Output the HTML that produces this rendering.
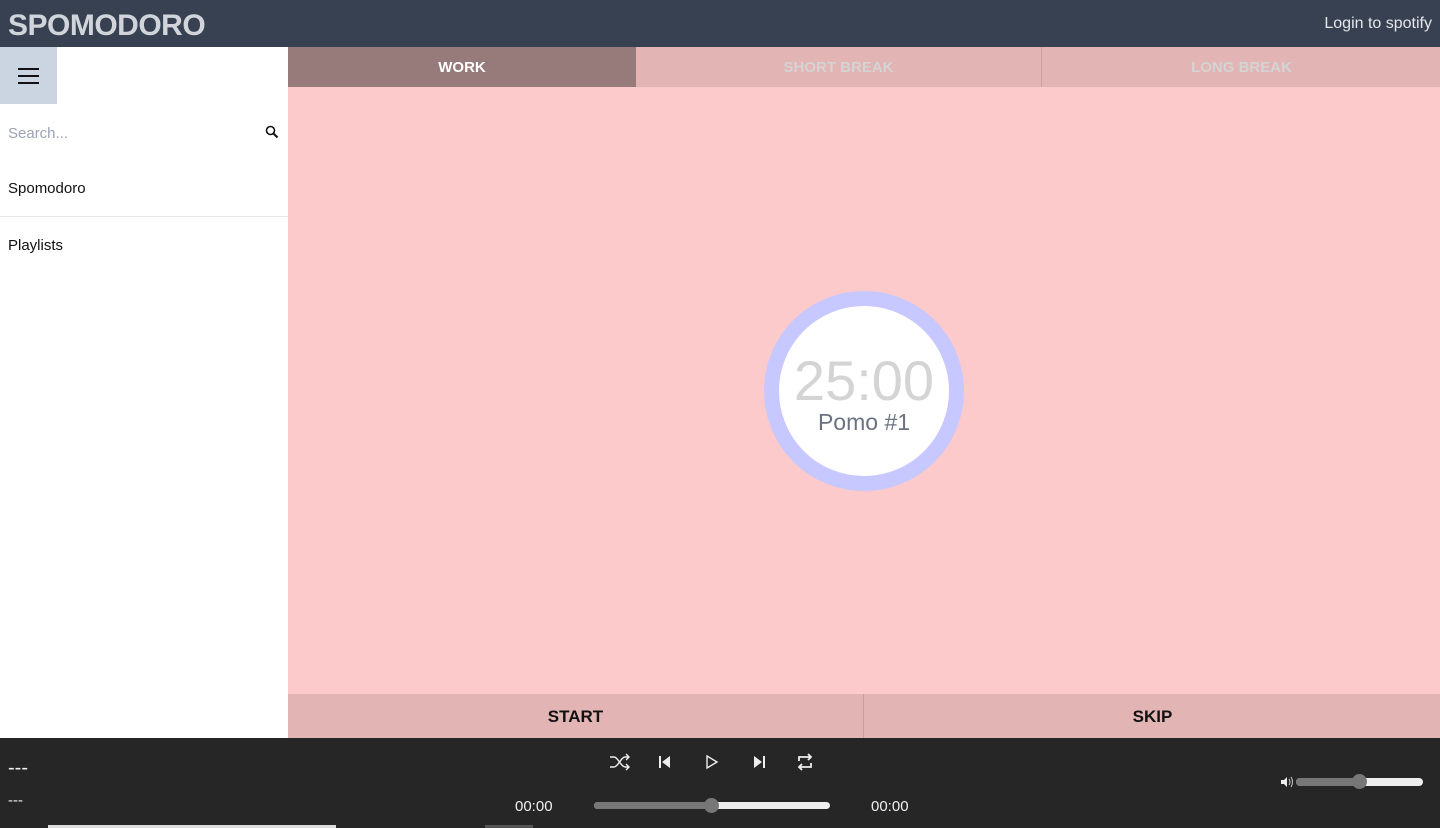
<!DOCTYPE html>
<html><head><meta charset="utf-8"><style>
*{margin:0;padding:0;box-sizing:border-box}
body{width:1440px;height:828px;overflow:hidden;font-family:"Liberation Sans",sans-serif;background:#fff;position:relative}
.hdr{position:absolute;left:0;top:0;width:1440px;height:47px;background:#374151}
.logo{position:absolute;left:8px;top:9px;font-size:30px;font-weight:bold;color:#d1d5db;letter-spacing:-0.5px}
.login{position:absolute;right:8px;top:15px;font-size:16px;color:#e5e7eb}
.side{position:absolute;left:0;top:47px;width:288px;height:691px;background:#fff}
.menu{position:absolute;left:0;top:0;width:57px;height:57px;background:#cbd5e1}
.menu i{position:absolute;left:18px;width:21px;height:2px;background:#111}
.search{position:absolute;left:8px;top:78px;font-size:15px;color:#9ca3af}
.item{position:absolute;left:8px;font-size:15px;color:#111}
.line{position:absolute;left:0;top:169px;width:288px;height:1px;background:#e5e7eb}
.main{position:absolute;left:288px;top:47px;width:1152px;height:691px;background:#fccaca}
.tabs{position:absolute;left:0;top:0;width:1152px;height:40px;background:#e2b4b4}
.tab{position:absolute;top:0;height:40px;line-height:42px;text-align:center;font-size:15px;font-weight:bold;color:#d4d4d4}
.circle{position:absolute;left:476px;top:244px;width:200px;height:200px;border-radius:50%;background:#fff;border:15px solid #c7c8ff}
.t{position:absolute;left:0;width:170px;text-align:center}
.btns{position:absolute;left:0;top:647px;width:1152px;height:44px;background:#e2b4b4}
.btn{position:absolute;top:0;height:44px;line-height:45px;text-align:center;font-size:17px;font-weight:bold;color:#111}
.player{position:absolute;left:0;top:738px;width:1440px;height:90px;background:#262626;color:#eee}
.ic{position:absolute;top:14px}
.tm{position:absolute;top:60px;font-size:15px;color:#f0f0f0}
</style></head><body>
<div class="hdr"><div class="logo">SPOMODORO</div><div class="login">Login to spotify</div></div>
<div class="side">
<div class="menu"><i style="top:21px"></i><i style="top:28px"></i><i style="top:35px"></i></div>
<div class="search">Search...</div>
<svg style="position:absolute;left:265px;top:78px" width="14" height="14" viewBox="0 0 14 14"><circle cx="5.5" cy="5.5" r="4" fill="none" stroke="#111" stroke-width="1.6"/><path d="M8.5 8.5L12.5 12.5" stroke="#111" stroke-width="2"/></svg>
<div class="item" style="top:133px">Spomodoro</div>
<div class="line"></div>
<div class="item" style="top:190px">Playlists</div>
</div>
<div class="main">
<div class="tabs">
<div class="tab" style="left:0;width:348px;background:#977a7a;color:#fff">WORK</div>
<div class="tab" style="left:348px;width:406px;border-right:1px solid #cfa0a0">SHORT BREAK</div>
<div class="tab" style="left:755px;width:397px">LONG BREAK</div>
</div>
<div class="circle">
<div class="t" style="top:42px;font-size:56px;color:#d4d4d4">25:00</div>
<div class="t" style="top:103px;font-size:23px;color:#6b7280">Pomo #1</div>
</div>
<div class="btns">
<div class="btn" style="left:0;width:576px;border-right:1px solid #c9a0a0">START</div>
<div class="btn" style="left:577px;width:575px">SKIP</div>
</div>
</div>
<div class="player">
<div style="position:absolute;left:8px;top:19px;font-size:20px">---</div>
<div style="position:absolute;left:8px;top:54px;font-size:15px">---</div>
<div style="position:absolute;left:48px;top:87px;width:288px;height:3px;background:#ddd"></div>
<div style="position:absolute;left:485px;top:87px;width:48px;height:3px;background:#555"></div>
<svg class="ic" style="left:609px" width="22" height="20" viewBox="0 0 22 20"><path d="M1 5h4c4 0 7 10 11 10h4M1 15h4c4 0 7-10 11-10h4M17 2l3 3-3 3M17 12l3 3-3 3" fill="none" stroke="#eee" stroke-width="1.4"/></svg>
<svg class="ic" style="left:658px" width="14" height="20" viewBox="0 0 14 20"><path d="M2 4v12" stroke="#eee" stroke-width="2"/><path d="M12 4v12L4 10z" fill="#eee"/></svg>
<svg class="ic" style="left:705px" width="14" height="20" viewBox="0 0 14 20"><path d="M2 4v12l10-6z" fill="none" stroke="#eee" stroke-width="1.4"/></svg>
<svg class="ic" style="left:752px" width="14" height="20" viewBox="0 0 14 20"><path d="M12 4v12" stroke="#eee" stroke-width="2"/><path d="M2 4v12l8-6z" fill="#eee"/></svg>
<svg class="ic" style="left:796px" width="18" height="20" viewBox="0 0 18 20"><path d="M3 9V5h12M12 2l3 3-3 3M15 11v4H3M6 12l-3 3 3 3" fill="none" stroke="#eee" stroke-width="1.8"/></svg>
<div class="tm" style="left:515px">00:00</div>
<div class="tm" style="left:871px">00:00</div>
<div style="position:absolute;left:594px;top:64px;width:236px;height:7px;border-radius:4px;background:#eee"></div>
<div style="position:absolute;left:594px;top:64px;width:118px;height:7px;border-radius:4px;background:#777"></div>
<div style="position:absolute;left:704px;top:60px;width:15px;height:15px;border-radius:50%;background:#777"></div>
<svg style="position:absolute;left:1280px;top:38px" width="14" height="12" viewBox="0 0 14 12"><path d="M1 4h3l3-3v10l-3-3H1z" fill="#eee"/><path d="M9 3q2 3 0 6M11 1q3 5 0 10" fill="none" stroke="#ccc" stroke-width="1"/></svg>
<div style="position:absolute;left:1296px;top:40px;width:127px;height:8px;border-radius:4px;background:#eee"></div>
<div style="position:absolute;left:1296px;top:40px;width:64px;height:8px;border-radius:4px;background:#777"></div>
<div style="position:absolute;left:1352px;top:36px;width:15px;height:15px;border-radius:50%;background:#777"></div>
</div>
</body></html>
